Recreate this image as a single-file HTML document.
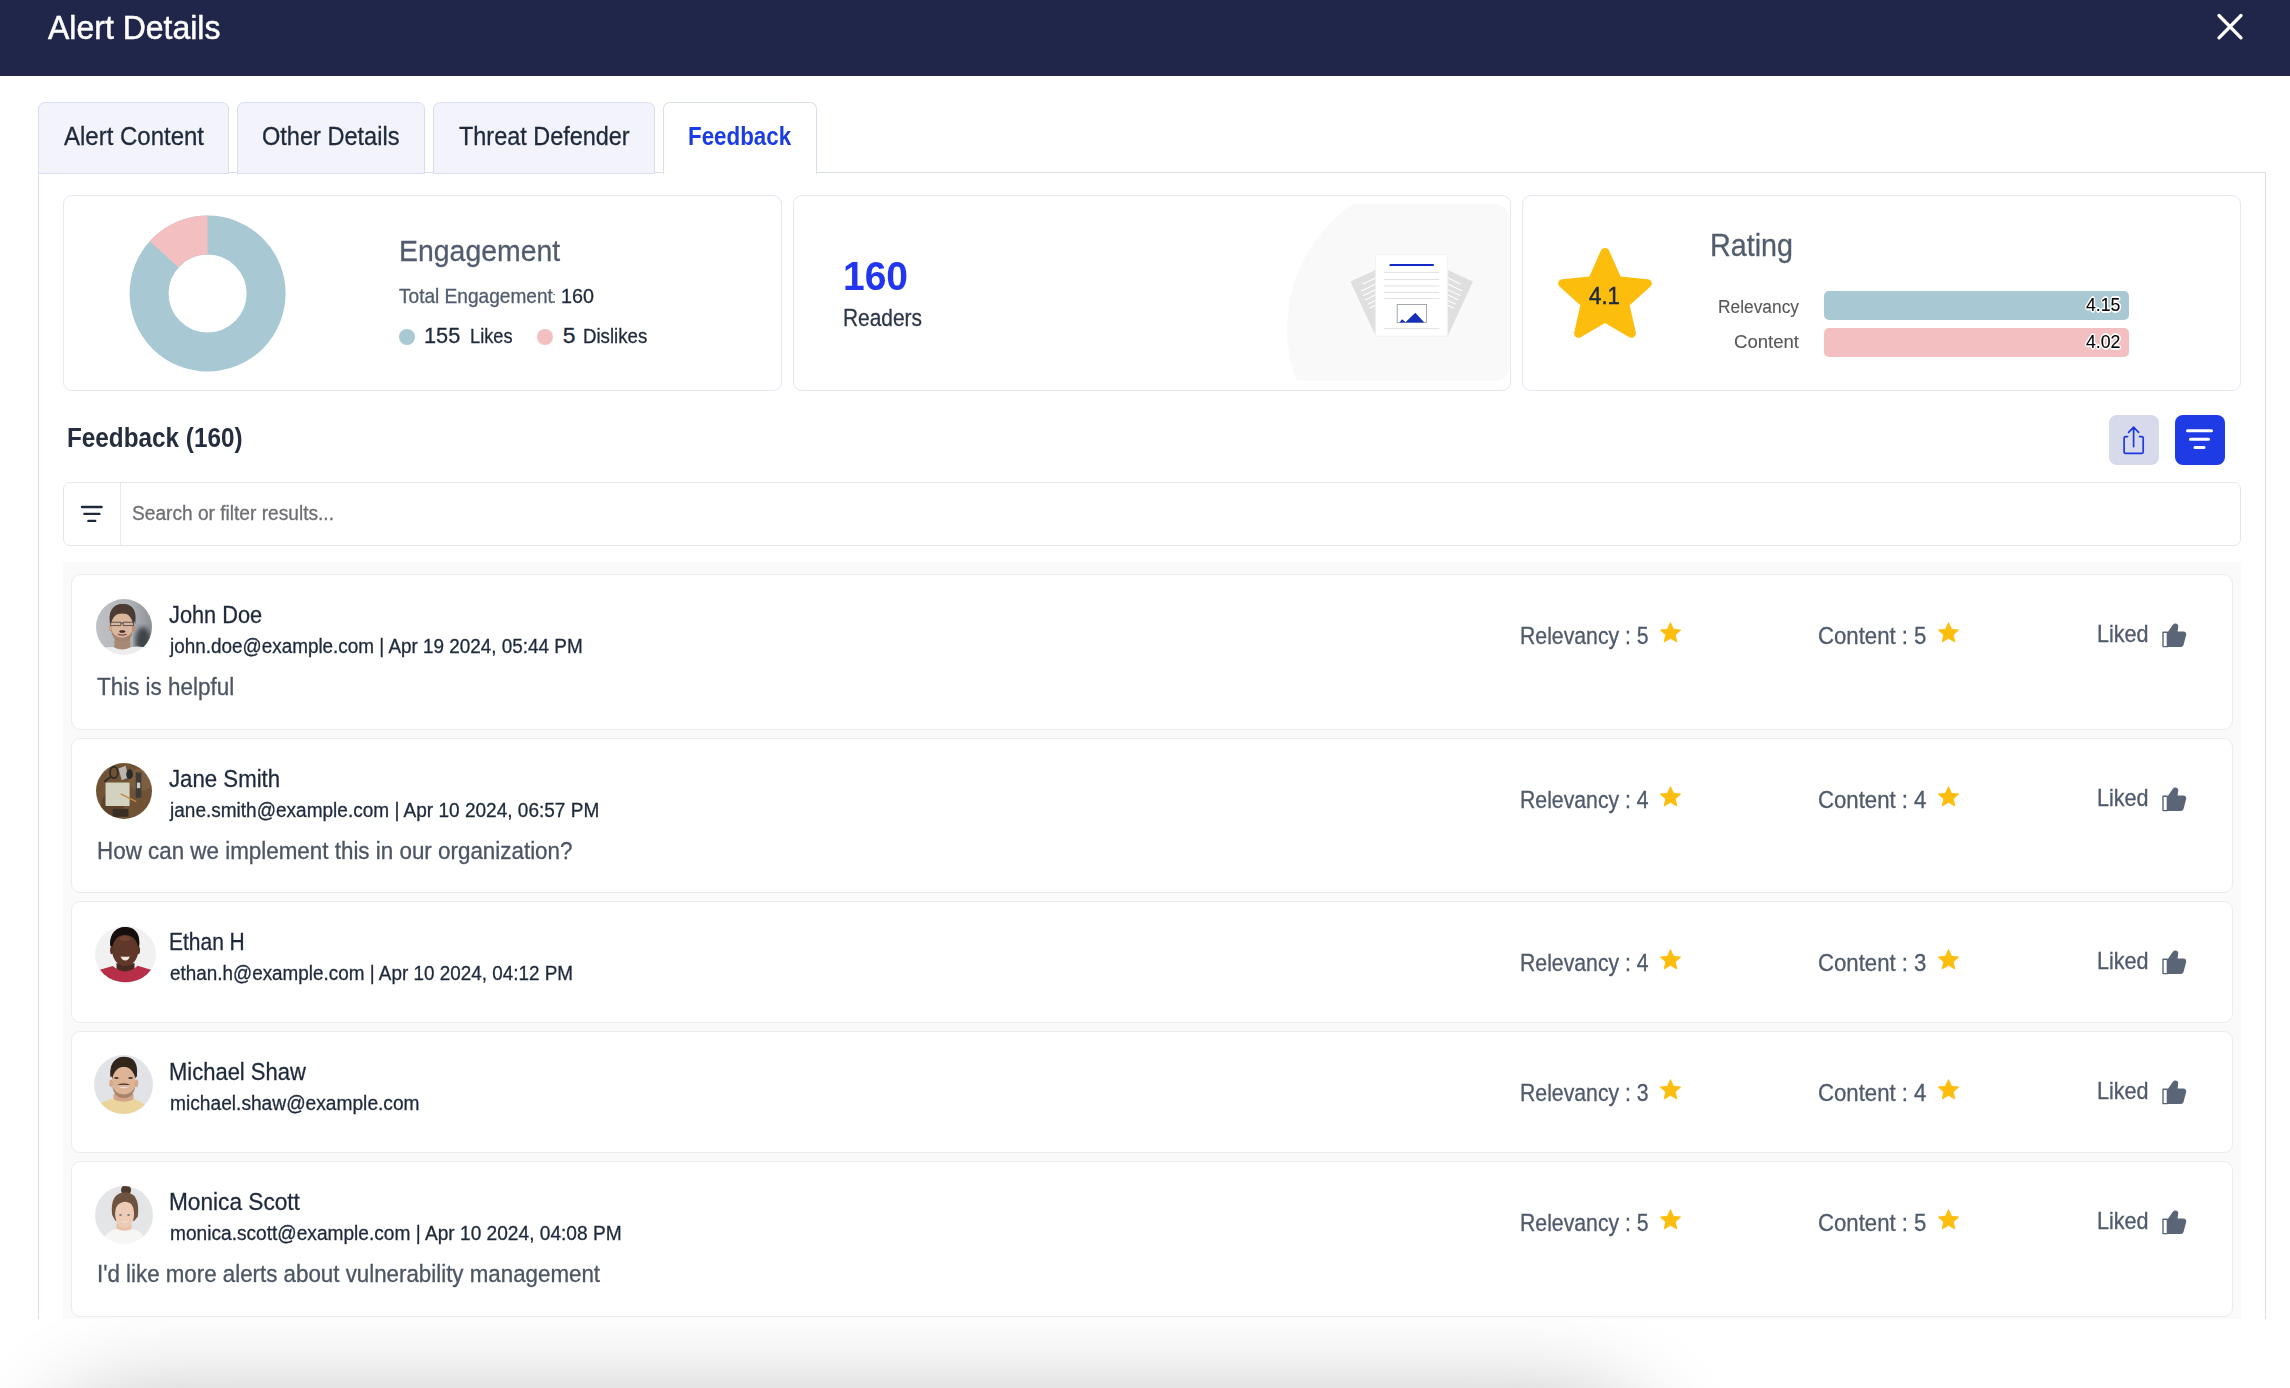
<!DOCTYPE html>
<html><head><meta charset="utf-8"><style>
html,body{margin:0;padding:0;}
body{width:2290px;height:1388px;position:relative;overflow:hidden;background:#fff;font-family:"Liberation Sans",sans-serif;}
.t{position:absolute;white-space:nowrap;transform-origin:0 0;}
</style></head><body>
<div style="position:absolute;left:0;top:0;width:2290px;height:76px;background:#20264a"></div>
<div class="t" style="left:48.00px;top:11.23px;font-size:33.87px;line-height:33.87px;color:#ffffff;transform:scaleX(0.9447);-webkit-text-stroke:0.5px #ffffff;">Alert Details</div>
<svg style="position:absolute;left:2213.4px;top:10px" width="34" height="34" viewBox="0 0 34 34"><path d="M6 5.5 L28 27.8 M28 5.5 L6 27.8" stroke="#fff" stroke-width="3.3" stroke-linecap="round"/></svg>
<div style="position:absolute;left:38px;top:172px;width:2228px;height:1147px;border:1px solid #d9ddf0;border-bottom:none;box-sizing:border-box"></div>
<div style="position:absolute;left:38px;top:102px;width:191px;height:72px;background:#f2f3fb;border:1px solid #d9ddf0;border-radius:7px 7px 0 0;box-sizing:border-box"></div>
<div class="t" style="left:64.00px;top:124.24px;font-size:25.58px;line-height:25.58px;color:#1e293b;transform:scaleX(0.9380);-webkit-text-stroke:0.3px #1e293b;">Alert Content</div>
<div style="position:absolute;left:237px;top:102px;width:188px;height:72px;background:#f2f3fb;border:1px solid #d9ddf0;border-radius:7px 7px 0 0;box-sizing:border-box"></div>
<div class="t" style="left:262.00px;top:124.24px;font-size:25.58px;line-height:25.58px;color:#1e293b;transform:scaleX(0.9206);-webkit-text-stroke:0.3px #1e293b;">Other Details</div>
<div style="position:absolute;left:433px;top:102px;width:222px;height:72px;background:#f2f3fb;border:1px solid #d9ddf0;border-radius:7px 7px 0 0;box-sizing:border-box"></div>
<div class="t" style="left:458.80px;top:124.24px;font-size:25.58px;line-height:25.58px;color:#1e293b;transform:scaleX(0.9160);-webkit-text-stroke:0.3px #1e293b;">Threat Defender</div>
<div style="position:absolute;left:663px;top:102px;width:154px;height:72px;background:#fff;border:1px solid #d9ddf0;border-bottom:none;border-radius:7px 7px 0 0;box-sizing:border-box"></div>
<div class="t" style="left:687.80px;top:124.24px;font-size:25.58px;line-height:25.58px;color:#1b3be3;transform:scaleX(0.8737);font-weight:bold;">Feedback</div>
<div style="position:absolute;left:63px;top:195px;width:719px;height:196px;border:1px solid #e5e7f3;border-radius:9px;box-sizing:border-box;background:#fff"></div>
<div style="position:absolute;left:793px;top:195px;width:718px;height:196px;border:1px solid #e5e7f3;border-radius:9px;box-sizing:border-box;background:#fff"></div>
<div style="position:absolute;left:1522px;top:195px;width:719px;height:196px;border:1px solid #e5e7f3;border-radius:9px;box-sizing:border-box;background:#fff"></div>
<svg style="position:absolute;left:0;top:0" width="400" height="400"><circle cx="207.6" cy="293.5" r="58.5" fill="none" stroke="#a8c8d3" stroke-width="39"/><path d="M207.6,215.5 L207.6,254.5 A39,39 0 0 0 178.62,267.40 L149.63,241.31 A78,78 0 0 1 207.6,215.5 Z" fill="#f4bfc0"/></svg>
<div class="t" style="left:398.60px;top:234.98px;font-size:30.38px;line-height:30.38px;color:#515c6d;transform:scaleX(0.9358);-webkit-text-stroke:0.3px #515c6d;">Engagement</div>
<div class="t" style="left:399.40px;top:286.22px;font-size:20.06px;line-height:20.06px;color:#515c6d;transform:scaleX(0.9522);-webkit-text-stroke:0.3px #515c6d;">Total Engagement</div>
<div class="t" style="left:561.00px;top:286.09px;font-size:20.20px;line-height:20.20px;color:#1e293b;transform:scaleX(0.9778);-webkit-text-stroke:0.3px #1e293b;">160</div>
<div style="position:absolute;left:553.4px;top:293.6px;width:1.4px;height:1.8px;background:#7a8391"></div><div style="position:absolute;left:553.4px;top:300.8px;width:1.4px;height:1.8px;background:#7a8391"></div>
<div style="position:absolute;left:399px;top:329px;width:16px;height:16px;border-radius:50%;background:#a8c8d3"></div>
<div style="position:absolute;left:537px;top:329px;width:16px;height:16px;border-radius:50%;background:#f4bfc0"></div>
<div class="t" style="left:424.20px;top:323.98px;font-size:22.82px;line-height:22.82px;color:#1e293b;transform:scaleX(0.9521);-webkit-text-stroke:0.3px #1e293b;">155</div>
<div class="t" style="left:470.00px;top:325.46px;font-size:21.08px;line-height:21.08px;color:#1e293b;transform:scaleX(0.8650);-webkit-text-stroke:0.3px #1e293b;">Likes</div>
<div class="t" style="left:562.80px;top:323.98px;font-size:22.82px;line-height:22.82px;color:#1e293b;-webkit-text-stroke:0.3px #1e293b;">5</div>
<div class="t" style="left:582.80px;top:325.46px;font-size:21.08px;line-height:21.08px;color:#1e293b;transform:scaleX(0.8854);-webkit-text-stroke:0.3px #1e293b;">Dislikes</div>
<div class="t" style="left:842.80px;top:256.46px;font-size:40.55px;line-height:40.55px;color:#2236ef;transform:scaleX(0.9612);font-weight:bold;">160</div>
<div class="t" style="left:843.30px;top:306.37px;font-size:24.13px;line-height:24.13px;color:#2d3748;transform:scaleX(0.8668);-webkit-text-stroke:0.3px #2d3748;">Readers</div>
<svg style="position:absolute;left:1280px;top:200px" width="235" height="185" viewBox="1280 200 235 185"><defs><clipPath id="blobc"><circle cx="1438.2" cy="328.8" r="151.2"/></clipPath></defs><rect x="1287" y="204" width="222.3" height="176.8" rx="14" fill="#f9f9f9" clip-path="url(#blobc)"/><path d="M1350.4 281.4 L1375.7 269.9 L1375.7 336.1 Z" fill="#dfdfdf"/><path d="M1473 281.4 L1447.7 269.9 L1447.7 336.1 Z" fill="#dfdfdf"/><g stroke="#fff" stroke-width="1.1" stroke-linecap="round"><path d="M1363.1 283.9 L1375.7 277.8 M1460.3 283.9 L1447.7 277.8"/><path d="M1361.6 290.7 L1375.7 283.9 M1461.8 290.7 L1447.7 283.9"/><path d="M1363.4 295.4 L1375.7 289.7 M1460.0 295.4 L1447.7 289.7"/><path d="M1365.6 299.8 L1375.7 294.7 M1457.8 299.8 L1447.7 294.7"/><path d="M1368.1 304.1 L1375.7 300.5 M1455.3 304.1 L1447.7 300.5"/><path d="M1369.9 308.0 L1375.7 305.2 M1453.5 308.0 L1447.7 305.2"/></g><rect x="1375.7" y="254.7" width="72" height="81.4" fill="#fff" stroke="#f0f0f0" stroke-width="0.8"/><rect x="1389.4" y="264" width="44.6" height="2.1" rx="1" fill="#1428c8"/><g fill="#e2e2e2"><rect x="1384.1" y="271.9" width="55.3" height="1"/><rect x="1384.1" y="278.9" width="55.3" height="1"/><rect x="1384.1" y="285.5" width="55.3" height="1"/><rect x="1384.1" y="291.9" width="55.3" height="1"/><rect x="1384.1" y="298" width="55.3" height="1"/><rect x="1384.1" y="328.1" width="55.3" height="1"/></g><rect x="1397.2" y="304.5" width="29.4" height="18" fill="#fff" stroke="#9aa0a8" stroke-width="0.9"/><path d="M1399.5 322.5 L1402 319.2 L1404.5 321.2 L1405.6 322.5 Z M1405.2 322.5 L1415.3 312.7 L1424.3 322.5 Z" fill="#1530b8"/></svg>
<svg style="position:absolute;left:1550px;top:241px" width="110" height="104" viewBox="0 0 24 24"><path d="M12 1.6 C12.5 1.6 12.8 1.9 13 2.3 L15.6 8.2 L21.9 8.8 C22.8 8.9 23.1 9.9 22.5 10.5 L17.7 14.8 L19.1 21.1 C19.3 22 18.4 22.6 17.6 22.2 L12 18.9 L6.4 22.2 C5.6 22.6 4.7 22 4.9 21.1 L6.3 14.8 L1.5 10.5 C0.9 9.9 1.2 8.9 2.1 8.8 L8.4 8.2 L11 2.3 C11.2 1.9 11.5 1.6 12 1.6 Z" fill="#fdbd0c"/></svg>
<div class="t" style="left:1588.90px;top:284.71px;font-size:23.26px;line-height:23.26px;color:#1e2a3c;transform:scaleX(0.9575);-webkit-text-stroke:0.5px #1e2a3c;">4.1</div>
<div class="t" style="left:1709.60px;top:230.16px;font-size:30.52px;line-height:30.52px;color:#515c6d;transform:scaleX(0.9405);-webkit-text-stroke:0.3px #515c6d;">Rating</div>
<div class="t" style="left:1718.30px;top:296.66px;font-size:19.19px;line-height:19.19px;color:#575859;transform:scaleX(0.9038);-webkit-text-stroke:0.12px #575859;">Relevancy</div>
<div class="t" style="left:1734.30px;top:331.78px;font-size:19.04px;line-height:19.04px;color:#575859;transform:scaleX(0.9756);-webkit-text-stroke:0.12px #575859;">Content</div>
<div style="position:absolute;left:1823.5px;top:291px;width:305.5px;height:28.5px;border-radius:5px;background:#a8c8d3"></div>
<div style="position:absolute;left:1823.5px;top:328px;width:305.5px;height:28.5px;border-radius:5px;background:#f4bfc0"></div>
<div class="t" style="left:2086.20px;top:294.66px;font-size:19.19px;line-height:19.19px;color:#000;transform:scaleX(0.9231);-webkit-text-stroke:0.1px #000;text-shadow:1.6px 0 0.6px #fff,-1.6px 0 0.6px #fff,0 1.6px 0.6px #fff,0 -1.6px 0.6px #fff,1.2px 1.2px 0.6px #fff,-1.2px -1.2px 0.6px #fff,1.2px -1.2px 0.6px #fff,-1.2px 1.2px 0.6px #fff;">4.15</div>
<div class="t" style="left:2086.20px;top:331.66px;font-size:19.19px;line-height:19.19px;color:#000;transform:scaleX(0.9231);-webkit-text-stroke:0.1px #000;text-shadow:1.6px 0 0.6px #fff,-1.6px 0 0.6px #fff,0 1.6px 0.6px #fff,0 -1.6px 0.6px #fff,1.2px 1.2px 0.6px #fff,-1.2px -1.2px 0.6px #fff,1.2px -1.2px 0.6px #fff,-1.2px 1.2px 0.6px #fff;">4.02</div>
<div class="t" style="left:67.00px;top:424.39px;font-size:27.76px;line-height:27.76px;color:#252e3e;transform:scaleX(0.8753);font-weight:bold;">Feedback (160)</div>
<div style="position:absolute;left:2109px;top:415px;width:50px;height:50px;border-radius:8px;background:#d6daeb"></div>
<svg style="position:absolute;left:2109px;top:415px" width="50" height="50" viewBox="2109 415 50 50"><path d="M2127.6 436.6 L2125.6 436.6 Q2124.1 436.6 2124.1 438.1 L2124.1 451.9 Q2124.1 453.4 2125.6 453.4 L2141.7 453.4 Q2143.2 453.4 2143.2 451.9 L2143.2 438.1 Q2143.2 436.6 2141.7 436.6 L2139.6 436.6 M2133.6 446.6 L2133.6 427.4 M2128.6 432.4 L2133.6 427.2 L2138.6 432.4" fill="none" stroke="#2039de" stroke-width="1.7" stroke-linecap="round" stroke-linejoin="round"/></svg>
<div style="position:absolute;left:2175px;top:415px;width:50px;height:50px;border-radius:8px;background:#1f3be6"></div>
<svg style="position:absolute;left:2175px;top:415px" width="50" height="50" viewBox="2175 415 50 50"><path d="M2187.5 430.7 L2211.5 430.7 M2190.5 439.3 L2208.5 439.3 M2195 447.5 L2204 447.5" stroke="#fff" stroke-width="3" stroke-linecap="round"/></svg>
<div style="position:absolute;left:63px;top:482px;width:2178px;height:64px;border:1px solid #e4e6ec;border-radius:7px;box-sizing:border-box;background:#fff"></div>
<div style="position:absolute;left:120px;top:483px;width:1px;height:62px;background:#e6e8ed"></div>
<svg style="position:absolute;left:70px;top:495px" width="40" height="40" viewBox="70 495 40 40"><path d="M82 507 L101.6 507 M84.4 513.9 L99.4 513.9 M88.4 520.9 L95.2 520.9" stroke="#1e293b" stroke-width="2.4" stroke-linecap="round"/></svg>
<div class="t" style="left:131.50px;top:503.07px;font-size:20.35px;line-height:20.35px;color:#6d6f73;transform:scaleX(0.9401);-webkit-text-stroke:0.3px #6d6f73;">Search or filter results...</div>
<div style="position:absolute;left:63px;top:562px;width:2178px;height:757px;background:#fafafa"></div>
<div style="position:absolute;left:71px;top:574px;width:2162px;height:156px;border:1px solid #ececed;border-radius:9px;box-sizing:border-box;background:#fff"></div>
<div class="t" style="left:169.20px;top:603.96px;font-size:23.55px;line-height:23.55px;color:#1e293b;transform:scaleX(0.9241);-webkit-text-stroke:0.3px #1e293b;">John Doe</div>
<div class="t" style="left:169.98px;top:637.26px;font-size:19.77px;line-height:19.77px;color:#1e293b;transform:scaleX(0.9559);-webkit-text-stroke:0.3px #1e293b;">john.doe@example.com | Apr 19 2024, 05:44 PM</div>
<div class="t" style="left:96.80px;top:675.76px;font-size:23.55px;line-height:23.55px;color:#4b5563;transform:scaleX(0.9528);-webkit-text-stroke:0.3px #4b5563;">This is helpful</div>
<div class="t" style="left:1519.80px;top:624.74px;font-size:23.69px;line-height:23.69px;color:#4f5a6b;transform:scaleX(0.8962);-webkit-text-stroke:0.3px #4f5a6b;">Relevancy : 5</div>
<svg style="position:absolute;left:1658px;top:620px" width="25" height="25" viewBox="0 0 24 24"><path d="M12 2.5 L14.9 8.9 L21.8 9.6 L16.6 14.3 L18.1 21.2 L12 17.6 L5.9 21.2 L7.4 14.3 L2.2 9.6 L9.1 8.9 Z" fill="#fdbd0c" stroke="#fdbd0c" stroke-width="0.8" stroke-linejoin="round"/></svg>
<div class="t" style="left:1817.90px;top:624.74px;font-size:23.69px;line-height:23.69px;color:#4f5a6b;transform:scaleX(0.9355);-webkit-text-stroke:0.3px #4f5a6b;">Content : 5</div>
<svg style="position:absolute;left:1936px;top:620px" width="25" height="25" viewBox="0 0 24 24"><path d="M12 2.5 L14.9 8.9 L21.8 9.6 L16.6 14.3 L18.1 21.2 L12 17.6 L5.9 21.2 L7.4 14.3 L2.2 9.6 L9.1 8.9 Z" fill="#fdbd0c" stroke="#fdbd0c" stroke-width="0.8" stroke-linejoin="round"/></svg>
<div class="t" style="left:2097.30px;top:623.13px;font-size:23.11px;line-height:23.11px;color:#4f5a6b;transform:scaleX(0.9339);-webkit-text-stroke:0.3px #4f5a6b;">Liked</div>
<svg style="position:absolute;left:2162px;top:623px" width="25" height="25" viewBox="0 0 25 25"><path d="M1 9.2 H5.4 V23.6 H1 Z" fill="#fff" stroke="#5a6577" stroke-width="1.4" stroke-linejoin="round"/><path d="M6 8.8 L10.5 2.2 C12 -0.5 16.8 0 16.2 3.6 L15.6 8.6 L21.6 8.6 C23.4 8.6 24.6 10.3 24.1 12.2 L21.5 22 C21.1 23.2 20.2 23.9 18.8 23.9 L6 23.9 Z" fill="#5a6577"/></svg>
<div style="position:absolute;left:71px;top:738px;width:2162px;height:155px;border:1px solid #ececed;border-radius:9px;box-sizing:border-box;background:#fff"></div>
<div class="t" style="left:169.20px;top:767.96px;font-size:23.55px;line-height:23.55px;color:#1e293b;transform:scaleX(0.9435);-webkit-text-stroke:0.3px #1e293b;">Jane Smith</div>
<div class="t" style="left:169.98px;top:801.26px;font-size:19.77px;line-height:19.77px;color:#1e293b;transform:scaleX(0.9624);-webkit-text-stroke:0.3px #1e293b;">jane.smith@example.com | Apr 10 2024, 06:57 PM</div>
<div class="t" style="left:96.80px;top:839.76px;font-size:23.55px;line-height:23.55px;color:#4b5563;transform:scaleX(0.9510);-webkit-text-stroke:0.3px #4b5563;">How can we implement this in our organization?</div>
<div class="t" style="left:1519.80px;top:788.74px;font-size:23.69px;line-height:23.69px;color:#4f5a6b;transform:scaleX(0.8962);-webkit-text-stroke:0.3px #4f5a6b;">Relevancy : 4</div>
<svg style="position:absolute;left:1658px;top:784px" width="25" height="25" viewBox="0 0 24 24"><path d="M12 2.5 L14.9 8.9 L21.8 9.6 L16.6 14.3 L18.1 21.2 L12 17.6 L5.9 21.2 L7.4 14.3 L2.2 9.6 L9.1 8.9 Z" fill="#fdbd0c" stroke="#fdbd0c" stroke-width="0.8" stroke-linejoin="round"/></svg>
<div class="t" style="left:1817.90px;top:788.74px;font-size:23.69px;line-height:23.69px;color:#4f5a6b;transform:scaleX(0.9355);-webkit-text-stroke:0.3px #4f5a6b;">Content : 4</div>
<svg style="position:absolute;left:1936px;top:784px" width="25" height="25" viewBox="0 0 24 24"><path d="M12 2.5 L14.9 8.9 L21.8 9.6 L16.6 14.3 L18.1 21.2 L12 17.6 L5.9 21.2 L7.4 14.3 L2.2 9.6 L9.1 8.9 Z" fill="#fdbd0c" stroke="#fdbd0c" stroke-width="0.8" stroke-linejoin="round"/></svg>
<div class="t" style="left:2097.30px;top:787.13px;font-size:23.11px;line-height:23.11px;color:#4f5a6b;transform:scaleX(0.9339);-webkit-text-stroke:0.3px #4f5a6b;">Liked</div>
<svg style="position:absolute;left:2162px;top:787px" width="25" height="25" viewBox="0 0 25 25"><path d="M1 9.2 H5.4 V23.6 H1 Z" fill="#fff" stroke="#5a6577" stroke-width="1.4" stroke-linejoin="round"/><path d="M6 8.8 L10.5 2.2 C12 -0.5 16.8 0 16.2 3.6 L15.6 8.6 L21.6 8.6 C23.4 8.6 24.6 10.3 24.1 12.2 L21.5 22 C21.1 23.2 20.2 23.9 18.8 23.9 L6 23.9 Z" fill="#5a6577"/></svg>
<div style="position:absolute;left:71px;top:901px;width:2162px;height:122px;border:1px solid #ececed;border-radius:9px;box-sizing:border-box;background:#fff"></div>
<div class="t" style="left:169.20px;top:930.96px;font-size:23.55px;line-height:23.55px;color:#1e293b;transform:scaleX(0.8905);-webkit-text-stroke:0.3px #1e293b;">Ethan H</div>
<div class="t" style="left:169.50px;top:964.26px;font-size:19.77px;line-height:19.77px;color:#1e293b;transform:scaleX(0.9553);-webkit-text-stroke:0.3px #1e293b;">ethan.h@example.com | Apr 10 2024, 04:12 PM</div>
<div class="t" style="left:1519.80px;top:951.74px;font-size:23.69px;line-height:23.69px;color:#4f5a6b;transform:scaleX(0.8962);-webkit-text-stroke:0.3px #4f5a6b;">Relevancy : 4</div>
<svg style="position:absolute;left:1658px;top:947px" width="25" height="25" viewBox="0 0 24 24"><path d="M12 2.5 L14.9 8.9 L21.8 9.6 L16.6 14.3 L18.1 21.2 L12 17.6 L5.9 21.2 L7.4 14.3 L2.2 9.6 L9.1 8.9 Z" fill="#fdbd0c" stroke="#fdbd0c" stroke-width="0.8" stroke-linejoin="round"/></svg>
<div class="t" style="left:1817.90px;top:951.74px;font-size:23.69px;line-height:23.69px;color:#4f5a6b;transform:scaleX(0.9355);-webkit-text-stroke:0.3px #4f5a6b;">Content : 3</div>
<svg style="position:absolute;left:1936px;top:947px" width="25" height="25" viewBox="0 0 24 24"><path d="M12 2.5 L14.9 8.9 L21.8 9.6 L16.6 14.3 L18.1 21.2 L12 17.6 L5.9 21.2 L7.4 14.3 L2.2 9.6 L9.1 8.9 Z" fill="#fdbd0c" stroke="#fdbd0c" stroke-width="0.8" stroke-linejoin="round"/></svg>
<div class="t" style="left:2097.30px;top:950.13px;font-size:23.11px;line-height:23.11px;color:#4f5a6b;transform:scaleX(0.9339);-webkit-text-stroke:0.3px #4f5a6b;">Liked</div>
<svg style="position:absolute;left:2162px;top:950px" width="25" height="25" viewBox="0 0 25 25"><path d="M1 9.2 H5.4 V23.6 H1 Z" fill="#fff" stroke="#5a6577" stroke-width="1.4" stroke-linejoin="round"/><path d="M6 8.8 L10.5 2.2 C12 -0.5 16.8 0 16.2 3.6 L15.6 8.6 L21.6 8.6 C23.4 8.6 24.6 10.3 24.1 12.2 L21.5 22 C21.1 23.2 20.2 23.9 18.8 23.9 L6 23.9 Z" fill="#5a6577"/></svg>
<div style="position:absolute;left:71px;top:1031px;width:2162px;height:122px;border:1px solid #ececed;border-radius:9px;box-sizing:border-box;background:#fff"></div>
<div class="t" style="left:169.20px;top:1060.96px;font-size:23.55px;line-height:23.55px;color:#1e293b;transform:scaleX(0.9336);-webkit-text-stroke:0.3px #1e293b;">Michael Shaw</div>
<div class="t" style="left:169.50px;top:1094.26px;font-size:19.77px;line-height:19.77px;color:#1e293b;transform:scaleX(0.9698);-webkit-text-stroke:0.3px #1e293b;">michael.shaw@example.com</div>
<div class="t" style="left:1519.80px;top:1081.74px;font-size:23.69px;line-height:23.69px;color:#4f5a6b;transform:scaleX(0.8962);-webkit-text-stroke:0.3px #4f5a6b;">Relevancy : 3</div>
<svg style="position:absolute;left:1658px;top:1077px" width="25" height="25" viewBox="0 0 24 24"><path d="M12 2.5 L14.9 8.9 L21.8 9.6 L16.6 14.3 L18.1 21.2 L12 17.6 L5.9 21.2 L7.4 14.3 L2.2 9.6 L9.1 8.9 Z" fill="#fdbd0c" stroke="#fdbd0c" stroke-width="0.8" stroke-linejoin="round"/></svg>
<div class="t" style="left:1817.90px;top:1081.74px;font-size:23.69px;line-height:23.69px;color:#4f5a6b;transform:scaleX(0.9355);-webkit-text-stroke:0.3px #4f5a6b;">Content : 4</div>
<svg style="position:absolute;left:1936px;top:1077px" width="25" height="25" viewBox="0 0 24 24"><path d="M12 2.5 L14.9 8.9 L21.8 9.6 L16.6 14.3 L18.1 21.2 L12 17.6 L5.9 21.2 L7.4 14.3 L2.2 9.6 L9.1 8.9 Z" fill="#fdbd0c" stroke="#fdbd0c" stroke-width="0.8" stroke-linejoin="round"/></svg>
<div class="t" style="left:2097.30px;top:1080.13px;font-size:23.11px;line-height:23.11px;color:#4f5a6b;transform:scaleX(0.9339);-webkit-text-stroke:0.3px #4f5a6b;">Liked</div>
<svg style="position:absolute;left:2162px;top:1080px" width="25" height="25" viewBox="0 0 25 25"><path d="M1 9.2 H5.4 V23.6 H1 Z" fill="#fff" stroke="#5a6577" stroke-width="1.4" stroke-linejoin="round"/><path d="M6 8.8 L10.5 2.2 C12 -0.5 16.8 0 16.2 3.6 L15.6 8.6 L21.6 8.6 C23.4 8.6 24.6 10.3 24.1 12.2 L21.5 22 C21.1 23.2 20.2 23.9 18.8 23.9 L6 23.9 Z" fill="#5a6577"/></svg>
<div style="position:absolute;left:71px;top:1161px;width:2162px;height:156px;border:1px solid #ececed;border-radius:9px;box-sizing:border-box;background:#fff"></div>
<div class="t" style="left:169.20px;top:1190.96px;font-size:23.55px;line-height:23.55px;color:#1e293b;transform:scaleX(0.9616);-webkit-text-stroke:0.3px #1e293b;">Monica Scott</div>
<div class="t" style="left:169.50px;top:1224.26px;font-size:19.77px;line-height:19.77px;color:#1e293b;transform:scaleX(0.9673);-webkit-text-stroke:0.3px #1e293b;">monica.scott@example.com | Apr 10 2024, 04:08 PM</div>
<div class="t" style="left:96.80px;top:1262.76px;font-size:23.55px;line-height:23.55px;color:#4b5563;transform:scaleX(0.9479);-webkit-text-stroke:0.3px #4b5563;">I'd like more alerts about vulnerability management</div>
<div class="t" style="left:1519.80px;top:1211.74px;font-size:23.69px;line-height:23.69px;color:#4f5a6b;transform:scaleX(0.8962);-webkit-text-stroke:0.3px #4f5a6b;">Relevancy : 5</div>
<svg style="position:absolute;left:1658px;top:1207px" width="25" height="25" viewBox="0 0 24 24"><path d="M12 2.5 L14.9 8.9 L21.8 9.6 L16.6 14.3 L18.1 21.2 L12 17.6 L5.9 21.2 L7.4 14.3 L2.2 9.6 L9.1 8.9 Z" fill="#fdbd0c" stroke="#fdbd0c" stroke-width="0.8" stroke-linejoin="round"/></svg>
<div class="t" style="left:1817.90px;top:1211.74px;font-size:23.69px;line-height:23.69px;color:#4f5a6b;transform:scaleX(0.9355);-webkit-text-stroke:0.3px #4f5a6b;">Content : 5</div>
<svg style="position:absolute;left:1936px;top:1207px" width="25" height="25" viewBox="0 0 24 24"><path d="M12 2.5 L14.9 8.9 L21.8 9.6 L16.6 14.3 L18.1 21.2 L12 17.6 L5.9 21.2 L7.4 14.3 L2.2 9.6 L9.1 8.9 Z" fill="#fdbd0c" stroke="#fdbd0c" stroke-width="0.8" stroke-linejoin="round"/></svg>
<div class="t" style="left:2097.30px;top:1210.13px;font-size:23.11px;line-height:23.11px;color:#4f5a6b;transform:scaleX(0.9339);-webkit-text-stroke:0.3px #4f5a6b;">Liked</div>
<svg style="position:absolute;left:2162px;top:1210px" width="25" height="25" viewBox="0 0 25 25"><path d="M1 9.2 H5.4 V23.6 H1 Z" fill="#fff" stroke="#5a6577" stroke-width="1.4" stroke-linejoin="round"/><path d="M6 8.8 L10.5 2.2 C12 -0.5 16.8 0 16.2 3.6 L15.6 8.6 L21.6 8.6 C23.4 8.6 24.6 10.3 24.1 12.2 L21.5 22 C21.1 23.2 20.2 23.9 18.8 23.9 L6 23.9 Z" fill="#5a6577"/></svg>
<svg style="position:absolute;left:96px;top:599px" width="56" height="56" viewBox="0 0 100 100" preserveAspectRatio="none"><defs><clipPath id="c0"><circle cx="50" cy="50" r="50"/></clipPath></defs><filter id="bl0" x="-10%" y="-10%" width="120%" height="120%"><feGaussianBlur stdDeviation="1.1"/></filter><g clip-path="url(#c0)"><g filter="url(#bl0)"><defs><linearGradient id="gj" x1="0" y1="0" x2="1" y2="0"><stop offset="0" stop-color="#bfc1c5"/><stop offset="0.6" stop-color="#b0b3b7"/><stop offset="1" stop-color="#8f9399"/></linearGradient><filter id="sj"><feGaussianBlur stdDeviation="5"/></filter></defs>
<rect width="100" height="100" fill="url(#gj)"/>
<ellipse cx="84" cy="74" rx="14" ry="24" fill="#2f343b" opacity="0.85" filter="url(#sj)"/>
<path d="M34 62 L32 92 L62 92 L60 62 Z" fill="#a88974"/>
<ellipse cx="47" cy="32" rx="22.5" ry="23" fill="#4b3b30"/><ellipse cx="46.5" cy="50" rx="20" ry="26" fill="#dab69d"/>
<ellipse cx="26" cy="52" rx="3" ry="6" fill="#c9a288"/>
<ellipse cx="67" cy="52" rx="3" ry="6" fill="#b8927a"/>
<path d="M27 54 Q29 76 46.5 76 Q64 76 66 54 Q62 68 46.5 69 Q31 68 27 54 Z" fill="#8f7060" opacity="0.7"/>
<path d="M25 44 C22 18 34 9 48 9 C64 9 74 19 70 45 L68.5 40 C66 31 58 26 47 26 C36 26 29 31 27 40 Z" fill="#4b3b30"/>
<path d="M26 41.5 H44.5 V47.5 H26 Z M48.5 41.5 H67 V47.5 H48.5 Z M44.5 43 H48.5" fill="none" stroke="#45403f" stroke-width="1.5"/>
<ellipse cx="47" cy="58" rx="5.5" ry="2.4" fill="#3b2a25"/>
<path d="M39 63 Q47 66 55 63" stroke="#7a4f48" stroke-width="2" fill="none"/>
<path d="M0 92 Q18 84 32 86 Q46 94 62 86 Q80 82 100 90 L100 100 L0 100 Z" fill="#ececec"/></g></g></svg>
<svg style="position:absolute;left:96px;top:763px" width="56" height="56" viewBox="0 0 100 100" preserveAspectRatio="none"><defs><clipPath id="c1"><circle cx="50" cy="50" r="50"/></clipPath></defs><filter id="bl1" x="-10%" y="-10%" width="120%" height="120%"><feGaussianBlur stdDeviation="1.1"/></filter><g clip-path="url(#c1)"><g filter="url(#bl1)"><rect width="100" height="100" fill="#6f5235"/>
<ellipse cx="30" cy="75" rx="20" ry="25" fill="#5d432c"/>
<ellipse cx="80" cy="30" rx="22" ry="20" fill="#7d5e3f"/>
<ellipse cx="32" cy="17" rx="7" ry="10" fill="none" stroke="#2c2926" stroke-width="3"/>
<path d="M26 25 L15 33" stroke="#2c2926" stroke-width="3"/>
<path d="M40 10 L53 5 L58 26 L46 31 Z" fill="#b9b6b0"/>
<ellipse cx="60" cy="20" rx="6" ry="9" fill="#2b2a29"/>
<rect x="71" y="17" width="10" height="45" fill="#3b3a38"/>
<rect x="73" y="35" width="6" height="10" fill="#c9c9c7"/>
<rect x="17" y="35" width="43" height="42" rx="1.5" fill="#d3d1bf"/>
<path d="M44 55 L72 69" stroke="#c48a3d" stroke-width="2.5"/>
<rect x="30" y="82" width="28" height="14" fill="#3a2e22"/></g></g></svg>
<svg style="position:absolute;left:94.5px;top:926px" width="61" height="56.5" viewBox="0 0 100 100" preserveAspectRatio="none"><defs><clipPath id="c2"><circle cx="50" cy="50" r="50"/></clipPath></defs><filter id="bl2" x="-10%" y="-10%" width="120%" height="120%"><feGaussianBlur stdDeviation="1.1"/></filter><g clip-path="url(#c2)"><g filter="url(#bl2)"><rect width="100" height="100" fill="#f1f1f1"/>
<path d="M35 66 L36 90 L64 90 L65 66 Z" fill="#4a2b20"/>
<ellipse cx="49" cy="30" rx="23.5" ry="28" fill="#141110"/><ellipse cx="49.5" cy="43" rx="21.5" ry="28" fill="#5e3829"/>
<ellipse cx="27.5" cy="43" rx="2.8" ry="7" fill="#5a3526"/>
<ellipse cx="71" cy="43" rx="2.8" ry="7" fill="#5a3526"/>
<path d="M25 36 C23 10 38 1.5 50 1.8 C63 2 75 10 72.5 36 L71 34 C69 22 60 16 49 16 C38 16 30 22 27 34 Z" fill="#141110"/>
<ellipse cx="49" cy="22" rx="9" ry="5" fill="#7b4c3a" opacity="0.6"/>
<path d="M42 54 Q50 55 57 54 Q55 61 50 61 Q44 61 42 54 Z" fill="#f3e8e2"/>
<path d="M0 80 L29 71 Q50 90 70 70.5 L100 80 L100 100 L0 100 Z" fill="#b72e48"/></g></g></svg>
<svg style="position:absolute;left:94px;top:1055px" width="59" height="59" viewBox="0 0 100 100" preserveAspectRatio="none"><defs><clipPath id="c3"><circle cx="50" cy="50" r="50"/></clipPath></defs><filter id="bl3" x="-10%" y="-10%" width="120%" height="120%"><feGaussianBlur stdDeviation="1.1"/></filter><g clip-path="url(#c3)"><g filter="url(#bl3)"><rect width="100" height="100" fill="#e2e3e7"/>
<path d="M33 66 L33 88 L67 88 L67 66 Z" fill="#d3a689"/>
<ellipse cx="50.5" cy="28" rx="22" ry="25" fill="#33281f"/><ellipse cx="50.5" cy="46" rx="20" ry="26" fill="#ddb496"/>
<ellipse cx="29" cy="48" rx="3" ry="6.5" fill="#d4a98b"/>
<ellipse cx="72" cy="48" rx="3" ry="6.5" fill="#d4a98b"/>
<path d="M28 38 C25 10 40 3.4 51 3.4 C65 3.4 76 10 72.5 38 L71 36 C69 25 61 20 50.5 20 C40 20 32 25 30 36 Z" fill="#33281f"/>
<path d="M31 52 Q33 72 50.5 73 Q68 72 70 52 Q66 66 50.5 67 Q35 66 31 52 Z" fill="#8b6a58" opacity="0.65"/>
<ellipse cx="38" cy="39" rx="4" ry="1.6" fill="#4a3a30"/>
<ellipse cx="62" cy="39" rx="4" ry="1.6" fill="#4a3a30"/>
<path d="M39 51 Q50 46 62 51 Q50 50 39 51 Z" fill="#3a2a22"/>
<path d="M41 53 Q50 60 60 53 Q50 56 41 53 Z" fill="#f0ece6"/>
<path d="M0 90 L11.6 81.5 L30.5 74 Q50 84 69 74.7 L85 83 L100 92 L100 100 L0 100 Z" fill="#ecd49d"/></g></g></svg>
<svg style="position:absolute;left:95px;top:1185.6px" width="58" height="58" viewBox="0 0 100 100" preserveAspectRatio="none"><defs><clipPath id="c4"><circle cx="50" cy="50" r="50"/></clipPath></defs><filter id="bl4" x="-10%" y="-10%" width="120%" height="120%"><feGaussianBlur stdDeviation="1.1"/></filter><g clip-path="url(#c4)"><g filter="url(#bl4)"><rect width="100" height="100" fill="#e4e5e6"/>
<circle cx="53.5" cy="7" r="8.7" fill="#4f3a2e"/>
<path d="M29.6 50 C26 20 38 11 52 11 C67 11 77 21 73.9 52 L68 60 L35 60 Z" fill="#6e5241"/>
<path d="M37 64 L37 84 L63 84 L63 64 Z" fill="#e8c0aa"/>
<ellipse cx="51" cy="48" rx="16.5" ry="25" fill="#edcbb6"/>
<path d="M33 44 C33 26 42 20 52 20 C62 20 70 27 69.5 45 C67 33 60 27 52 27 C44 27 36 33 33 44 Z" fill="#6e5241"/>
<ellipse cx="44" cy="50" rx="2.6" ry="1.3" fill="#5b6570"/>
<ellipse cx="58" cy="50" rx="2.6" ry="1.3" fill="#5b6570"/>
<path d="M44 60 Q51 66 58 60 Q51 63 44 60 Z" fill="#fbf6f2"/>
<path d="M0 100 L12 92 Q26 74 38 74 Q51 80 64 74 Q76 74 88 92 L100 100 Z" fill="#f6f6f4"/></g></g></svg>
<div style="position:absolute;left:0;top:1319px;width:2290px;height:69px;overflow:hidden"><div style="position:absolute;left:50px;top:81px;width:1600px;height:300px;background:#000;opacity:0.27;filter:blur(50px);border-radius:80px"></div></div>
</body></html>
